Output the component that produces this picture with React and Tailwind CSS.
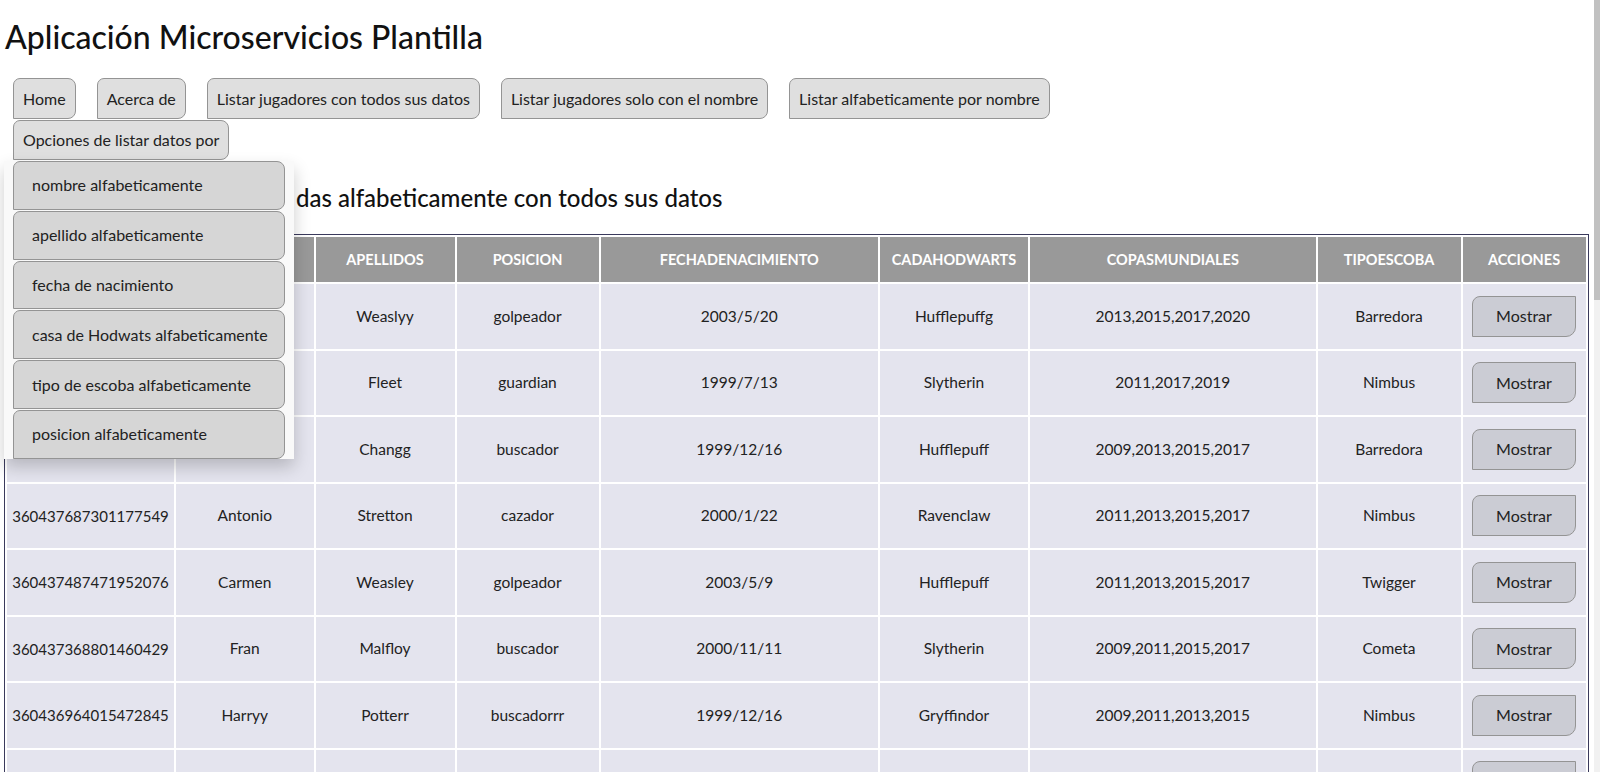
import React from "react";

const navButtons = [
  "Home",
  "Acerca de",
  "Listar jugadores con todos sus datos",
  "Listar jugadores solo con el nombre",
  "Listar alfabeticamente por nombre",
];

const menuItems = [
  "nombre alfabeticamente",
  "apellido alfabeticamente",
  "fecha de nacimiento",
  "casa de Hodwats alfabeticamente",
  "tipo de escoba alfabeticamente",
  "posicion alfabeticamente",
];

const headers = [
  { t: "ID", w: "w-[167px]" },
  { t: "NOMBRE", w: "w-[137.5px]" },
  { t: "APELLIDOS", w: "w-[139px]" },
  { t: "POSICION", w: "w-[142px]" },
  { t: "FECHADENACIMIENTO", w: "w-[277.5px]" },
  { t: "CADAHODWARTS", w: "w-[148px]" },
  { t: "COPASMUNDIALES", w: "w-[285.5px]" },
  { t: "TIPOESCOBA", w: "w-[143px]" },
  { t: "ACCIONES", w: "w-[123px]" },
];

const rows = [
  ["360438012345678901", "Ginny", "Weaslyy", "golpeador", "2003/5/20", "Hufflepuffg", "2013,2015,2017,2020", "Barredora"],
  ["360437998877665544", "Oliver", "Fleet", "guardian", "1999/7/13", "Slytherin", "2011,2017,2019", "Nimbus"],
  ["360437890123456789", "Cho", "Changg", "buscador", "1999/12/16", "Hufflepuff", "2009,2013,2015,2017", "Barredora"],
  ["360437687301177549", "Antonio", "Stretton", "cazador", "2000/1/22", "Ravenclaw", "2011,2013,2015,2017", "Nimbus"],
  ["360437487471952076", "Carmen", "Weasley", "golpeador", "2003/5/9", "Hufflepuff", "2011,2013,2015,2017", "Twigger"],
  ["360437368801460429", "Fran", "Malfloy", "buscador", "2000/11/11", "Slytherin", "2009,2011,2015,2017", "Cometa"],
  ["360436964015472845", "Harryy", "Potterr", "buscadorrr", "1999/12/16", "Gryffindor", "2009,2011,2013,2015", "Nimbus"],
  ["360436512345098765", "Luna", "Lovegood", "cazador", "2001/2/13", "Ravenclaw", "2011,2015", "Cometa"],
];

export default function App() {
  return (
    <div className="h-screen overflow-hidden flex bg-white font-['Lato',_'Open_Sans',_sans-serif] text-[#222]">
      <div className="flex-1 min-w-0 pl-[5px]">
        <h1 className="text-[32px] leading-[36px] font-medium pt-[19px] text-[#111]">
          Aplicación Microservicios Plantilla
        </h1>

        <nav className="mt-[23px] pl-[8px]">
          <div className="flex gap-x-[21px]">
            {navButtons.map((b) => (
              <button
                key={b}
                className="h-[41px] px-[9px] bg-[#dfdfdf] border border-[#949494] rounded-tl-[7px] rounded-tr-[8px] rounded-br-[8px] text-[16px] text-[#222] whitespace-nowrap"
              >
                {b}
              </button>
            ))}
          </div>
          <div className="relative inline-block mt-[1px]">
            <button className="h-[40px] px-[9px] bg-[#dfdfdf] border border-[#949494] rounded-tl-[7px] rounded-tr-[8px] rounded-br-[8px] text-[16px] text-[#222] whitespace-nowrap">
              Opciones de listar datos por
            </button>
            <div className="absolute z-10 top-full left-[-9px] mt-[1px] w-[290px] bg-[#f9f9f9] px-[9px] flex flex-col gap-[1px] shadow-[0_8px_16px_0_rgba(0,0,0,0.2)]">
              {menuItems.map((m) => (
                <button
                  key={m}
                  className="h-[48.8px] w-[272px] text-left pl-[18px] bg-[#d6d6d6] border border-[#949494] rounded-tl-[7px] rounded-tr-[8px] rounded-br-[8px] text-[16px] text-[#222] whitespace-nowrap"
                >
                  {m}
                </button>
              ))}
            </div>
          </div>
        </nav>

        <h2 className="text-[24px] leading-[30px] font-medium mt-[23px] text-[#111] whitespace-nowrap">
          <span className="inline-block w-[291px] overflow-hidden align-bottom">Lista de jugadores ordena</span>
          das alfabeticamente con todos sus datos
        </h2>

        <table className="mt-[21px] ml-[-1px] w-[1584px] table-fixed border-separate border-spacing-[2px] border border-[#3a3a5c] text-[15.5px] text-[#222]">
          <thead>
            <tr>
              {headers.map((h) => (
                <th
                  key={h.t}
                  className={`${h.w} h-[45px] bg-[#999999] text-white font-bold text-[14.5px] text-center`}
                >
                  {h.t}
                </th>
              ))}
            </tr>
          </thead>
          <tbody>
            {rows.map((r, i) => (
              <tr key={i}>
                {r.map((c, j) => (
                  <td key={j} className={`h-[64.5px] bg-[#e4e4ee] text-center ${j === 0 ? "text-[15px]" : ""}`}>
                    {c}
                  </td>
                ))}
                <td className="h-[64.5px] bg-[#e4e4ee] text-center">
                  <button className="h-[41px] w-[104px] bg-[#cbccd4] border border-[#949494] rounded-tl-[8px] rounded-br-[10px] text-[16px] text-[#222]">
                    Mostrar
                  </button>
                </td>
              </tr>
            ))}
          </tbody>
        </table>
      </div>

      <div className="w-[6px] shrink-0 bg-[#f1f1f1] flex flex-col">
        <div className="h-[300px] bg-[#c1c1c1]" />
      </div>
    </div>
  );
}
